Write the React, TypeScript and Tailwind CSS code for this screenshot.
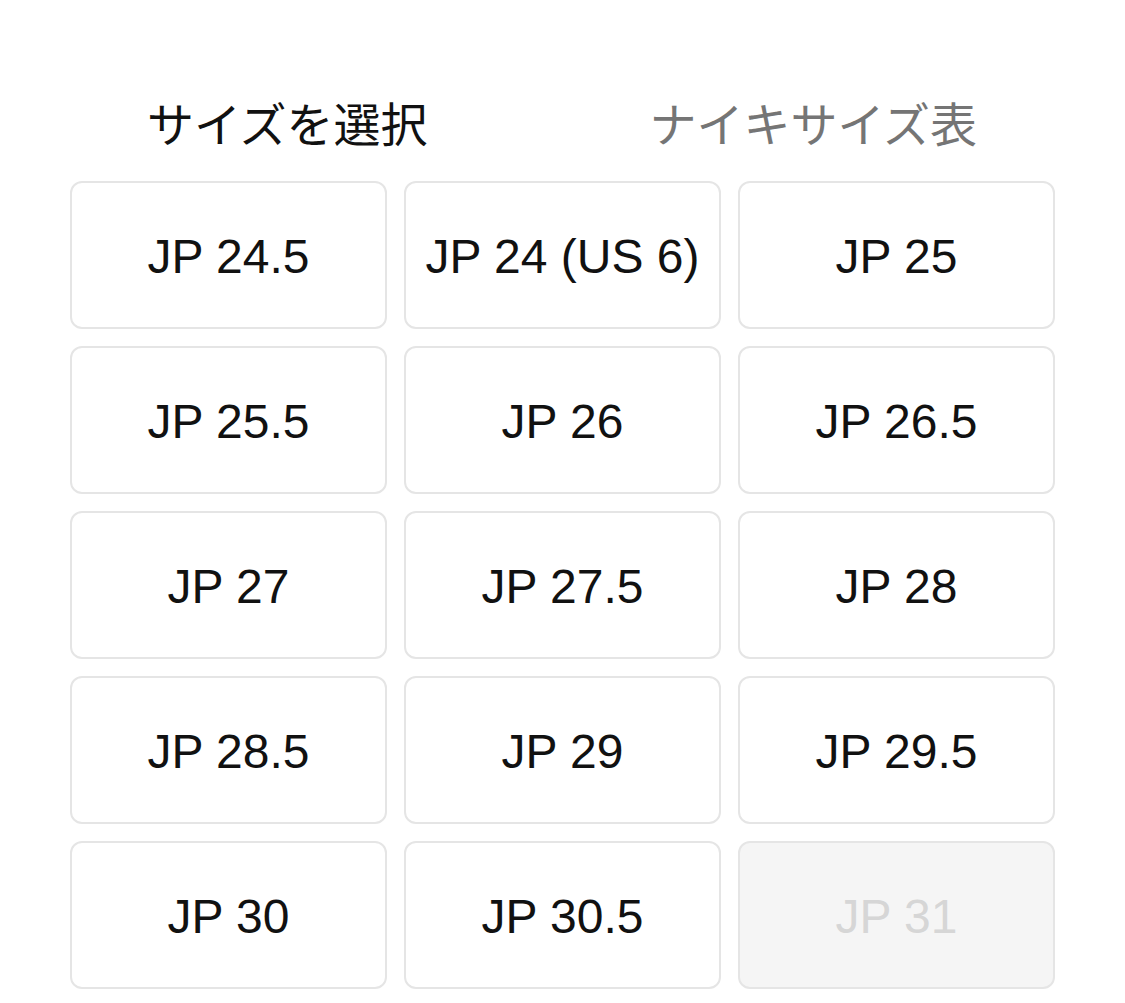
const sizes: { label: string; soldOut?: boolean }[] = [
  { label: "JP 24.5" },
  { label: "JP 24 (US 6)" },
  { label: "JP 25" },
  { label: "JP 25.5" },
  { label: "JP 26" },
  { label: "JP 26.5" },
  { label: "JP 27" },
  { label: "JP 27.5" },
  { label: "JP 28" },
  { label: "JP 28.5" },
  { label: "JP 29" },
  { label: "JP 29.5" },
  { label: "JP 30" },
  { label: "JP 30.5" },
  { label: "JP 31", soldOut: true },
];

export default function App() {
  return (
    <div className="min-h-screen bg-white px-[70px] font-['Liberation_Sans','Noto_Sans_CJK_JP',sans-serif]">
      <div className="flex items-center justify-between pb-[29px] pl-[77px] pr-[78px] pt-[92px] text-[47px] leading-[60px] font-['Noto_Sans_CJK_JP',sans-serif]">
        <span className="text-[#111111]">サイズを選択</span>
        <span className="text-[#757575]">ナイキサイズ表</span>
      </div>
      <div className="grid grid-cols-3 gap-[17px]">
        {sizes.map((s) => (
          <button
            key={s.label}
            type="button"
            disabled={s.soldOut}
            className={
              s.soldOut
                ? "flex h-[148px] items-center justify-center rounded-[12px] border-2 border-[#e5e5e5] bg-[#f5f5f5] pt-[4px] text-[48px] text-[#d6d6d6]"
                : "flex h-[148px] items-center justify-center rounded-[12px] border-2 border-[#e5e5e5] bg-white pt-[4px] text-[48px] text-[#111111]"
            }
          >
            {s.label}
          </button>
        ))}
      </div>
    </div>
  );
}
